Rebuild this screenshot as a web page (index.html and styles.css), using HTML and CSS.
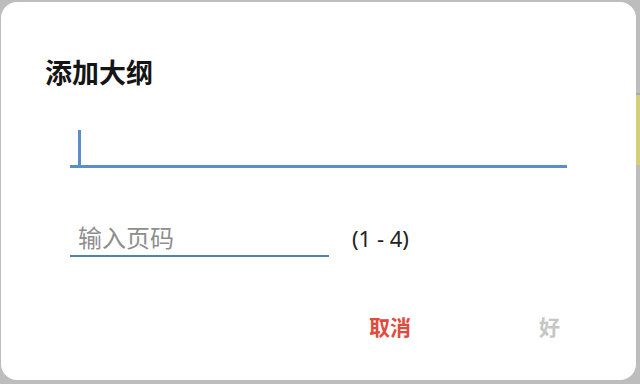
FILE: index.html
```html
<!DOCTYPE html>
<html lang="zh-CN">
<head>
<meta charset="utf-8">
<title>添加大纲</title>
<link rel="stylesheet" href="styles.css">
</head>
<body>
<div class="screen">
  <div class="dialog">
    <div class="title">添加大纲</div>
    <div class="field-main"><span class="cursor"></span></div>
    <div class="page-row">
      <div class="field-page">输入页码</div>
      <div class="range">(1 - 4)</div>
    </div>
    <div class="actions">
      <span class="btn cancel">取消</span>
      <span class="btn ok">好</span>
    </div>
  </div>
  <div class="edge">
    <div class="edge-top"></div>
    <div class="edge-yellow"></div>
    <div class="edge-rest"></div>
  </div>
</div>
</body>
</html>
```

FILE: styles.css
```css
html, body {
  margin: 0;
  padding: 0;
  width: 640px;
  height: 384px;
  overflow: hidden;
  background: #bdbdbd;
  font-family: "Noto Sans CJK SC", "Noto Sans", sans-serif;
}

.screen {
  display: flex;
  width: 640px;
  height: 384px;
}

.dialog {
  width: 635px;
  height: 378px;
  margin: 2px 0 0 1px;
  background: #ffffff;
  border-radius: 16px;
  display: flex;
  flex-direction: column;
  box-sizing: border-box;
  padding-top: 56px;
}

.title {
  margin-left: 44px;
  font-size: 27px;
  line-height: 27px;
  font-weight: 700;
  color: #151515;
}

.field-main {
  margin: 43px 0 0 69px;
  width: 497px;
  height: 40px;
  box-sizing: border-box;
  border-bottom: 3px solid #5b8dcb;
  display: flex;
  align-items: flex-end;
}

.cursor {
  display: block;
  width: 3px;
  height: 35px;
  margin-left: 8px;
  background: #5b8dcb;
}

.page-row {
  display: flex;
  align-items: flex-start;
  margin: 57px 0 0 69px;
}

.field-page {
  width: 259px;
  box-sizing: border-box;
  padding: 0 0 6px 8px;
  font-size: 24px;
  line-height: 24px;
  color: #8e8e8e;
  border-bottom: 2px solid #4d86a9;
}

.range {
  margin: 1px 0 0 23px;
  font-family: "Noto Sans", "Noto Sans CJK SC", sans-serif;
  font-size: 22px;
  line-height: 24px;
  color: #222222;
}

.actions {
  display: flex;
  justify-content: flex-end;
  margin: 59px 76px 0 0;
  gap: 128px;
}

.btn {
  font-size: 21px;
  line-height: 21px;
  font-weight: 700;
}

.cancel {
  color: #e24a3c;
}

.ok {
  color: #c6c6c6;
}

.edge {
  flex: 1;
  display: flex;
  flex-direction: column;
}

.edge-top {
  height: 95px;
  border-bottom: 2px solid #a9a9a9;
  box-sizing: border-box;
}

.edge-yellow {
  height: 70px;
  background: #d6cf7a;
}

.edge-rest {
  flex: 1;
}
```
